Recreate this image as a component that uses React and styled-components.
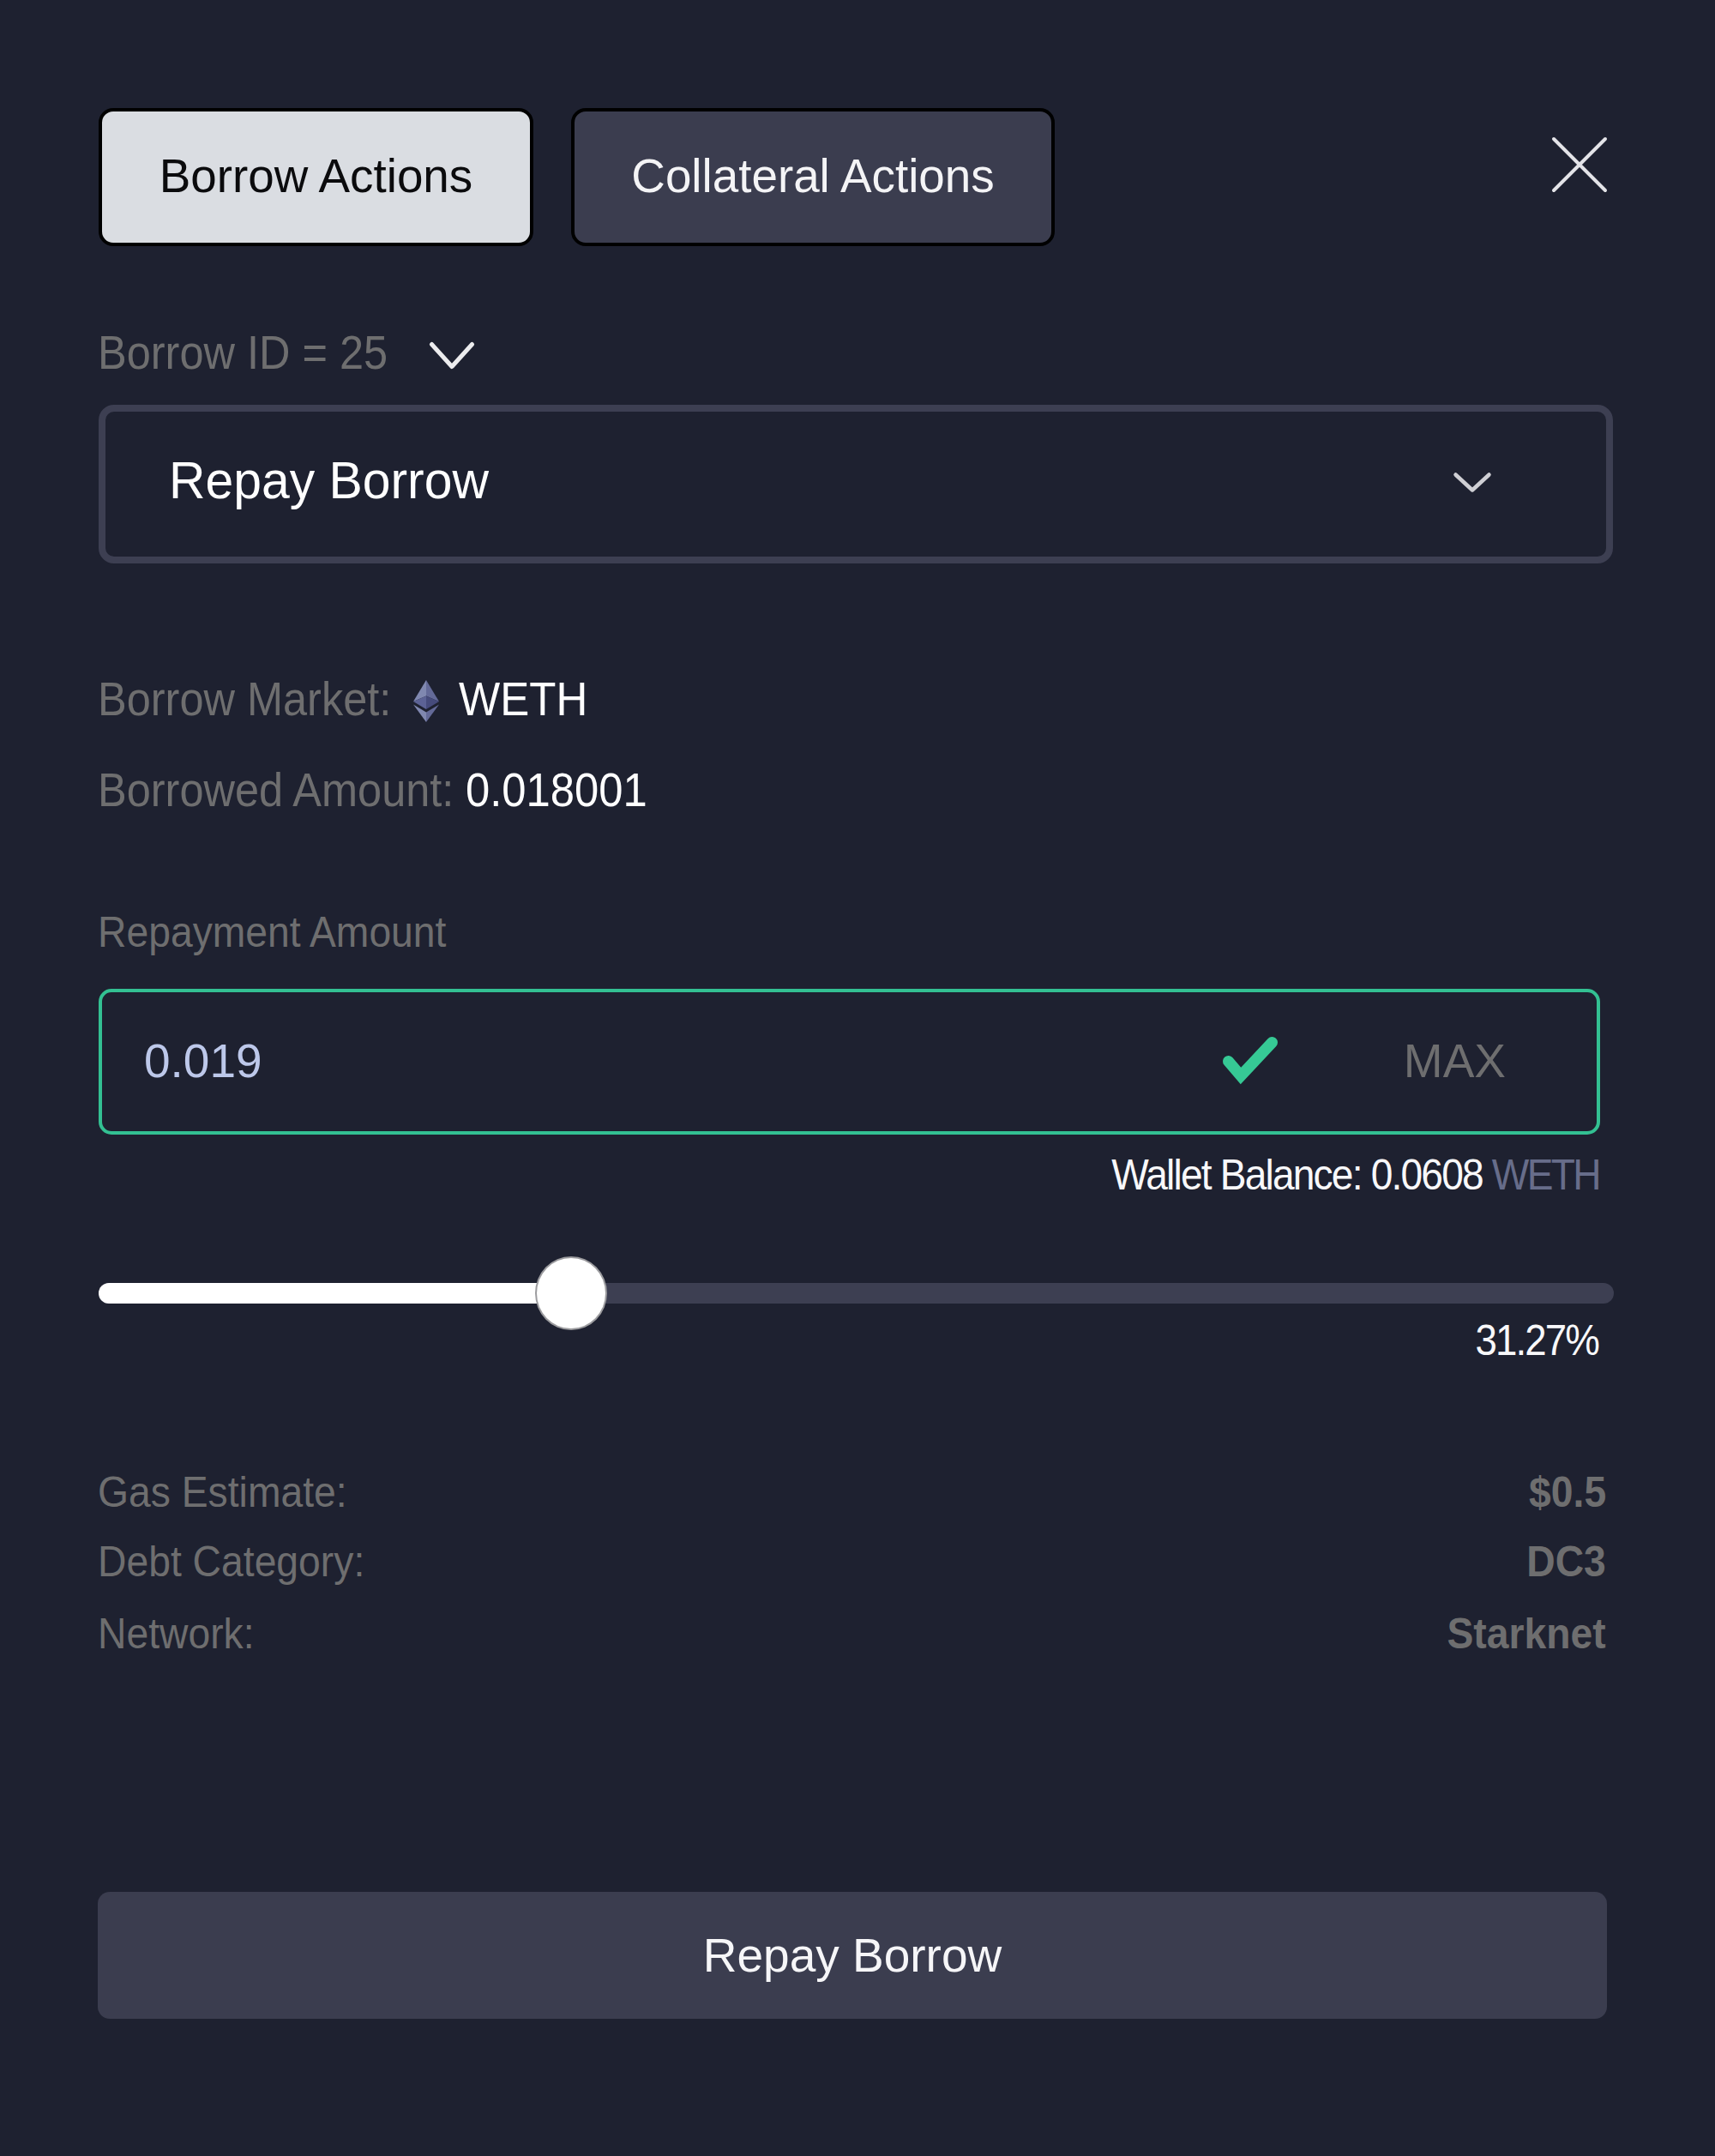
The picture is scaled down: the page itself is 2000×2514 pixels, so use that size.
import React from "react";
import styled, { createGlobalStyle } from "styled-components";

const GlobalStyle = createGlobalStyle`
  body {
    margin: 0;
    background: #1e2130;
    font-family: "Liberation Sans", Arial, sans-serif;
  }
  button, input { font-family: inherit; }
`;

const GREY = "#6e6e6f";

const Panel = styled.main`
  box-sizing: border-box;
  width: 2000px;
  height: 2514px;
  padding: 126px 117px 0 115px;
  background: #1e2130;
  display: flex;
  flex-direction: column;
`;

const Header = styled.header`
  display: flex;
  height: 161px;
`;

const Tab = styled.button`
  box-sizing: border-box;
  width: ${(p) => p.$width}px;
  height: 161px;
  margin: 0 44px 0 0;
  padding: 0 0 4px;
  border: 4px solid #000;
  border-radius: 17px;
  background: ${(p) => (p.$active ? "#dadde2" : "#3b3d4f")};
  color: ${(p) => (p.$active ? "#0b0b0d" : "#f4f4f6")};
  font-size: 54.8px;
  white-space: nowrap;
`;

const CloseButton = styled.button`
  margin: 32px 7px 0 auto;
  padding: 0;
  width: 68px;
  height: 68px;
  border: 0;
  background: none;
`;

const Icon = styled.svg`
  display: block;
  flex: none;
  overflow: visible;
`;

const Row = styled.div`
  display: flex;
  align-items: center;
  justify-content: ${(p) => (p.$end ? "flex-end" : "flex-start")};
  height: ${(p) => p.$height || 50}px;
  margin-top: ${(p) => p.$gap}px;
  margin-left: -1px;
  padding-right: ${(p) => p.$right || 0}px;
`;

const Text = styled.span`
  display: block;
  flex: none;
  width: ${(p) => (p.$width ? `${p.$width}px` : "auto")};
  color: ${(p) => p.$color || GREY};
  font-size: ${(p) => (p.$small ? 49.4 : 55)}px;
  font-weight: ${(p) => (p.$bold ? 700 : 400)};
  letter-spacing: ${(p) => p.$spacing || 0}px;
  line-height: 50px;
  white-space: nowrap;
  transform: scaleX(${(p) => p.$stretch || (p.$small ? 0.937 : 0.918)});
  transform-origin: ${(p) => (p.$right ? "right" : "left")} center;
`;

const IconSlot = styled.span`
  padding-top: ${(p) => p.$drop}px;
`;

const AssetName = styled.span`
  margin-left: 23px;
`;

const Select = styled.div`
  box-sizing: border-box;
  display: flex;
  align-items: center;
  justify-content: space-between;
  height: 185px;
  margin-top: 41px;
  margin-right: 2px;
  padding: 0 134px 3px 74px;
  border: 8px solid #3d3f52;
  border-radius: 18px;
`;

const SelectValue = styled.span`
  margin-bottom: 6px;
  color: #fff;
  font-size: 61px;
  transform: scaleX(0.965);
  transform-origin: left center;
`;

const Field = styled.div`
  box-sizing: border-box;
  display: flex;
  align-items: center;
  height: 170px;
  width: 1751px;
  margin-top: 41px;
  padding: 0 106px 3px 49px;
  border: 4.5px solid #33c092;
  border-radius: 15px;
`;

const AmountInput = styled.input`
  flex: 1;
  min-width: 0;
  padding: 0;
  border: 0;
  outline: 0;
  background: none;
  color: #bdc8ea;
  font-size: 55px;
`;

const MaxButton = styled.button`
  margin-left: 146px;
  padding: 0;
  border: 0;
  background: none;
  color: ${GREY};
  font-size: 55px;
`;

const Track = styled.div`
  position: relative;
  height: 24px;
  margin-top: 101px;
  margin-right: 1px;
  border-radius: 12px;
  background: #3d3f52;
`;

const Filled = styled.div`
  width: 31.27%;
  height: 100%;
  border-radius: 12px;
  background: #fff;
`;

const Thumb = styled.div`
  position: absolute;
  box-sizing: border-box;
  top: -31px;
  left: 509px;
  width: 84px;
  height: 86px;
  border: 2px solid #9c9c9f;
  border-radius: 50%;
  background: #fff;
`;

const Unit = styled.span`
  color: #676d8a;
  letter-spacing: -2.9px;
`;

const InfoRow = styled(Row)`
  justify-content: space-between;
  padding-right: 10px;
`;

const Submit = styled.button`
  height: 148px;
  width: 1760px;
  margin-top: 276px;
  margin-left: -1px;
  padding: 0;
  border: 0;
  border-radius: 14px;
  background: #3b3d4f;
  color: #f6f6f8;
  font-size: 55px;
`;

const details = [
  { label: "Gas Estimate:", value: "$0.5", gap: 132 },
  { label: "Debt Category:", value: "DC3", gap: 31 },
  { label: "Network:", value: "Starknet", gap: 34 },
];

function Chevron({ width, height, weight, color }) {
  return (
    <Icon width={width} height={height}>
      <path
        d={`M2.5 2.5 L${width / 2} ${height - 3.5} L${width - 2.5} 2.5`}
        fill="none"
        stroke={color}
        strokeWidth={weight}
        strokeLinecap="round"
        strokeLinejoin="round"
      />
    </Icon>
  );
}

function EthIcon() {
  return (
    <Icon width="30" height="49" viewBox="0 0 30 49">
      <path d="M15 0 L0 25 L15 18.5Z" fill="#8088b0" />
      <path d="M15 0 L30 25 L15 18.5Z" fill="#646a98" />
      <path d="M0 25 L15 18.5 V34Z" fill="#5c6295" />
      <path d="M30 25 L15 18.5 V34Z" fill="#464b7c" />
      <path d="M0 28.5 L15 37.5 V49Z" fill="#8088b0" />
      <path d="M30 28.5 L15 37.5 V49Z" fill="#646a98" />
    </Icon>
  );
}

export default function App() {
  return (
    <Panel>
      <GlobalStyle />
      <Header>
        <Tab $active $width={507}>Borrow Actions</Tab>
        <Tab $width={564}>Collateral Actions</Tab>
        <CloseButton aria-label="Close">
          <Icon width="68" height="68">
            <path
              d="M4 4 L64 64 M64 4 L4 64"
              stroke="#e4e4e8"
              strokeWidth="4"
              strokeLinecap="round"
            />
          </Icon>
        </CloseButton>
      </Header>

      <Row $height={40} $gap={104}>
        <Text $width={387}>Borrow ID = 25</Text>
        <IconSlot $drop={7}>
          <Chevron width={52} height={32} weight={5} color="#ececee" />
        </IconSlot>
      </Row>

      <Select>
        <SelectValue>Repay Borrow</SelectValue>
        <Chevron width={44} height={24} weight={4.5} color="#cfcfd4" />
      </Select>

      <Row $height={60} $gap={128}>
        <Text $width={368}>Borrow Market:</Text>
        <IconSlot $drop={4}>
          <EthIcon />
        </IconSlot>
        <AssetName>
          <Text $color="#fff" $stretch={0.928}>WETH</Text>
        </AssetName>
      </Row>
      <Row $height={60} $gap={46}>
        <Text $width={429}>Borrowed Amount:</Text>
        <Text $color="#fff" $stretch={0.923}>0.018001</Text>
      </Row>

      <Row $gap={111}>
        <Text $small>Repayment Amount</Text>
      </Row>
      <Field>
        <AmountInput defaultValue="0.019" />
        <Icon width="66" height="58" viewBox="0 0 66 58">
          <path
            d="M7.5 29.5 L22 46.5 L58.5 7.5"
            fill="none"
            stroke="#36c995"
            strokeWidth="13"
            strokeLinecap="round"
          />
        </Icon>
        <MaxButton>MAX</MaxButton>
      </Field>
      <Row $end $gap={22} $right={18}>
        <Text $small $right $spacing={-1.95} $stretch={0.934} $color="#f8f8fa">
          Wallet Balance: 0.0608 <Unit>WETH</Unit>
        </Text>
      </Row>

      <Track>
        <Filled />
        <Thumb />
      </Track>
      <Row $end $height={40} $gap={23} $right={19}>
        <Text $small $right $spacing={-2.1} $stretch={0.925} $color="#f8f8fa">31.27%</Text>
      </Row>

      {details.map((d) => (
        <InfoRow key={d.label} $gap={d.gap}>
          <Text $small>{d.label}</Text>
          <Text $small $bold $right>{d.value}</Text>
        </InfoRow>
      ))}

      <Submit>Repay Borrow</Submit>
    </Panel>
  );
}
